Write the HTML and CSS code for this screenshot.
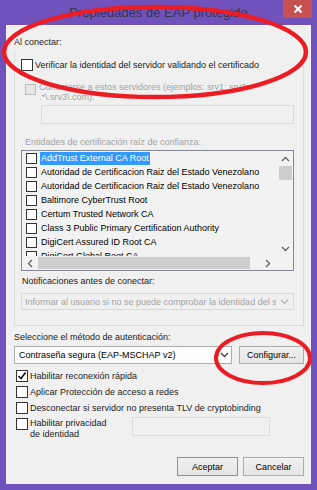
FILE: index.html
```html
<!DOCTYPE html>
<html>
<head>
<meta charset="utf-8">
<link rel="stylesheet" href="styles.css">
</head>
<body>
<div class="titlebar">
  <div class="title">Propiedades de EAP protegido</div>
  <div class="close"><svg width="10" height="10" viewBox="0 0 10 10"><path d="M1.5 1.5L8.5 8.5M8.5 1.5L1.5 8.5" stroke="#fff" stroke-width="2"/></svg></div>
</div>
<div class="client">
  <div class="lbl top-lbl">Al conectar:</div>
  <div class="group">
    <div class="row r1"><span class="cb"></span><span class="txt">Verificar la identidad del servidor validando el certificado</span></div>
    <div class="row r2"><span class="cb dis sm"></span><span class="dtext two">Conectarse a estos servidores (ejemplos: srv1; srv2;<br>.*\.srv3\.com):</span></div>
    <div class="tbox"></div>
    <div class="lbl dtext l-ent">Entidades de certificación raíz de confianza:</div>
    <div class="list">
      <div class="list-main">
        <div class="items">
          <div class="item"><span class="cb sm"></span><span class="itxt sel">AddTrust External CA Root</span></div>
          <div class="item"><span class="cb sm"></span><span class="itxt">Autoridad de Certificacion Raiz del Estado Venezolano</span></div>
          <div class="item"><span class="cb sm"></span><span class="itxt">Autoridad de Certificacion Raiz del Estado Venezolano</span></div>
          <div class="item"><span class="cb sm"></span><span class="itxt">Baltimore CyberTrust Root</span></div>
          <div class="item"><span class="cb sm"></span><span class="itxt">Certum Trusted Network CA</span></div>
          <div class="item"><span class="cb sm"></span><span class="itxt">Class 3 Public Primary Certification Authority</span></div>
          <div class="item"><span class="cb sm"></span><span class="itxt">DigiCert Assured ID Root CA</span></div>
          <div class="item"><span class="cb sm"></span><span class="itxt">DigiCert Global Root CA</span></div>
        </div>
        <div class="vscroll">
          <div class="sbtn"><svg width="9" height="6" viewBox="0 0 9 6"><path d="M1 5L4.5 1.5L8 5" fill="none" stroke="#606060" stroke-width="1.3"/></svg></div>
          <div class="vthumb"></div>
          <div class="vtrack"></div>
          <div class="sbtn"><svg width="9" height="6" viewBox="0 0 9 6"><path d="M1 1L4.5 4.5L8 1" fill="none" stroke="#606060" stroke-width="1.3"/></svg></div>
        </div>
      </div>
      <div class="hscroll">
        <div class="hbtn"><svg width="6" height="9" viewBox="0 0 6 9"><path d="M5 1L1.5 4.5L5 8" fill="none" stroke="#606060" stroke-width="1.3"/></svg></div>
        <div class="hthumb"></div>
        <div class="htrack"></div>
        <div class="hbtn"><svg width="6" height="9" viewBox="0 0 6 9"><path d="M1 1L4.5 4.5L1 8" fill="none" stroke="#606060" stroke-width="1.3"/></svg></div>
        <div class="corner"></div>
      </div>
    </div>
    <div class="lbl l-not">Notificaciones antes de conectar:</div>
    <div class="dcombo">
      <span class="dtext">Informar al usuario si no se puede comprobar la identidad del s</span>
      <svg width="9" height="6" viewBox="0 0 9 6"><path d="M1 1L4.5 4.5L8 1" fill="none" stroke="#b0b0b0" stroke-width="1.2"/></svg>
    </div>
  </div>
  <div class="lbl l-sel">Seleccione el método de autenticación:</div>
  <div class="auth">
    <div class="combo">
      <span class="ctext">Contraseña segura (EAP-MSCHAP v2)</span>
      <span class="carrow"><svg width="9" height="6" viewBox="0 0 9 6"><path d="M1 1L4.5 4.5L8 1" fill="none" stroke="#404040" stroke-width="1.3"/></svg></span>
    </div>
    <div class="btn cfg">Configurar...</div>
  </div>
  <div class="checks">
    <div class="crow"><span class="cb chk"><svg width="10" height="10" viewBox="0 0 10 10"><path d="M1.5 5L4 7.5L8.5 1.5" fill="none" stroke="#111" stroke-width="1.6"/></svg></span><span class="txt">Habilitar reconexión rápida</span></div>
    <div class="crow"><span class="cb"></span><span class="txt">Aplicar Protección de acceso a redes</span></div>
    <div class="crow"><span class="cb"></span><span class="txt">Desconectar si servidor no presenta TLV de cryptobinding</span></div>
    <div class="crow priv"><span class="cb"></span><span class="txt ptxt">Habilitar privacidad<br>de identidad</span><div class="pbox"></div></div>
  </div>
  <div class="buttons">
    <div class="btn def">Aceptar</div>
    <div class="btn">Cancelar</div>
  </div>
</div>
<svg class="marks" width="317" height="490" viewBox="0 0 317 490">
  <ellipse cx="155" cy="52" rx="151" ry="45" fill="none" stroke="#ec1c24" stroke-width="4.5"/>
  <ellipse cx="263" cy="358" rx="47" ry="25" fill="none" stroke="#ec1c24" stroke-width="4"/>
</svg>
</body>
</html>
```

FILE: styles.css
```css
* { box-sizing: border-box; }
html, body { margin: 0; padding: 0; }
body {
  width: 317px;
  height: 490px;
  background: #7152bd;
  font-family: "Liberation Sans", Arial, sans-serif;
  font-size: 9px;
  color: #1a1a1a;
  overflow: hidden;
  position: relative;
}
.titlebar { height: 25px; position: relative; }
.title {
  text-align: center;
  font-size: 13px;
  line-height: 25px;
  color: #35344a;
}
.close {
  position: absolute;
  top: 0;
  left: 283px;
  width: 29px;
  height: 18px;
  background: #c75050;
  display: flex;
  align-items: center;
  justify-content: center;
}
.client {
  margin: 0 6px;
  height: 459px;
  background: #f0f0f0;
  border-top: 1px solid #f8f8f8;
  padding: 0 7px 0 8px;
  display: flow-root;
}
.lbl { line-height: 12px; height: 12px; white-space: nowrap; }
.top-lbl { margin-top: 10px; }
.group {
  display: flow-root;
  margin-top: 5px;
  border: 1px solid #dcdcdc;
  border-top: none;
  padding: 0 9px 15px 6px;
}
.row { display: flex; white-space: nowrap; }
.cb {
  width: 12px;
  height: 12px;
  border: 1px solid #333;
  background: #fff;
  flex: none;
  display: flex;
  align-items: center;
  justify-content: center;
}
.cb.sm { width: 11px; height: 11px; }
.cb.dis { background: #e6e6e6; border-color: #bcbcbc; }
.txt { line-height: 12px; }
.r1 { margin-top: 5px; height: 13px; align-items: center; gap: 2px; }
.r2 { margin-top: 11px; padding-left: 4px; gap: 3px; align-items: flex-start; }
.r2 .cb { margin-top: 2px; }
.dtext { color: #a3a3a3; }
.two { line-height: 10px; }
.tbox {
  margin-top: 3px;
  margin-left: 20px;
  width: 253px;
  height: 19px;
  border: 1px solid #d9d9d9;
  background: #f0f0f0;
}
.l-ent { margin-top: 12px; padding-left: 4px; }
.list {
  margin-top: 2px;
  height: 121px;
  border: 1px solid #828790;
  background: #f2f2f2;
}
.list-main { height: 105px; display: flex; }
.items { flex: 1; overflow: hidden; }
.item {
  height: 14px;
  display: flex;
  align-items: center;
  padding-left: 4px;
  gap: 3px;
  white-space: nowrap;
  color: #000;
}
.itxt { padding: 0 1px; line-height: 13px; }
.sel { background: #3399ff; color: #fff; }
.vscroll { width: 16px; display: flex; flex-direction: column; align-items: center; }
.sbtn { height: 15px; width: 16px; display: flex; align-items: center; justify-content: center; }
.vthumb { width: 13px; height: 14px; background: #cdcdcd; }
.vtrack { flex: 1; }
.hscroll { height: 14px; display: flex; align-items: center; }
.hbtn { width: 16px; height: 14px; display: flex; align-items: center; justify-content: center; }
.hthumb { width: 212px; height: 12px; background: #cdcdcd; }
.htrack { width: 10px; }
.corner { width: 17px; height: 14px; }
.l-not { margin-top: 4px; padding-left: 1px; color: #1a1a1a; }
.dcombo {
  margin-top: 6px;
  height: 17px;
  border: 1px solid #d9d9d9;
  background: #f0f0f0;
  display: flex;
  align-items: center;
  padding: 0 4px 0 3px;
  gap: 4px;
  white-space: nowrap;
  overflow: hidden;
}
.dcombo .dtext { flex: 1; overflow: hidden; }
.l-sel { margin-top: 5px; }
.auth { margin-top: 3px; height: 18px; display: flex; gap: 7px; }
.combo {
  width: 218px;
  height: 18px;
  border: 1px solid #acacac;
  background: #fcfcfc;
  display: flex;
  align-items: center;
  padding-left: 4px;
}
.ctext { flex: 1; white-space: nowrap; color: #000; }
.carrow { width: 14px; height: 16px; display: flex; align-items: center; justify-content: center; }
.btn {
  width: 61px;
  height: 19px;
  border: 1px solid #acacac;
  background: linear-gradient(#f0f0f0, #e5e5e5);
  display: flex;
  align-items: center;
  justify-content: center;
  color: #000;
}
.btn.cfg { width: 65px; height: 18px; }
.btn.def { border-color: #5c9ee0; }
.checks { margin-top: 6px; padding-left: 2px; }
.crow { height: 16px; display: flex; align-items: flex-start; gap: 2px; white-space: nowrap; }
.priv { height: 24px; }
.ptxt { line-height: 11px; width: 100px; }
.pbox {
  margin-top: -1px;
  width: 138px;
  height: 19px;
  border: 1px solid #dcdcdc;
  background: #f0f0f0;
}
.buttons { margin-top: 15px; display: flex; justify-content: flex-end; gap: 5px; }
.marks { position: absolute; top: 0; left: 0; pointer-events: none; }
```
